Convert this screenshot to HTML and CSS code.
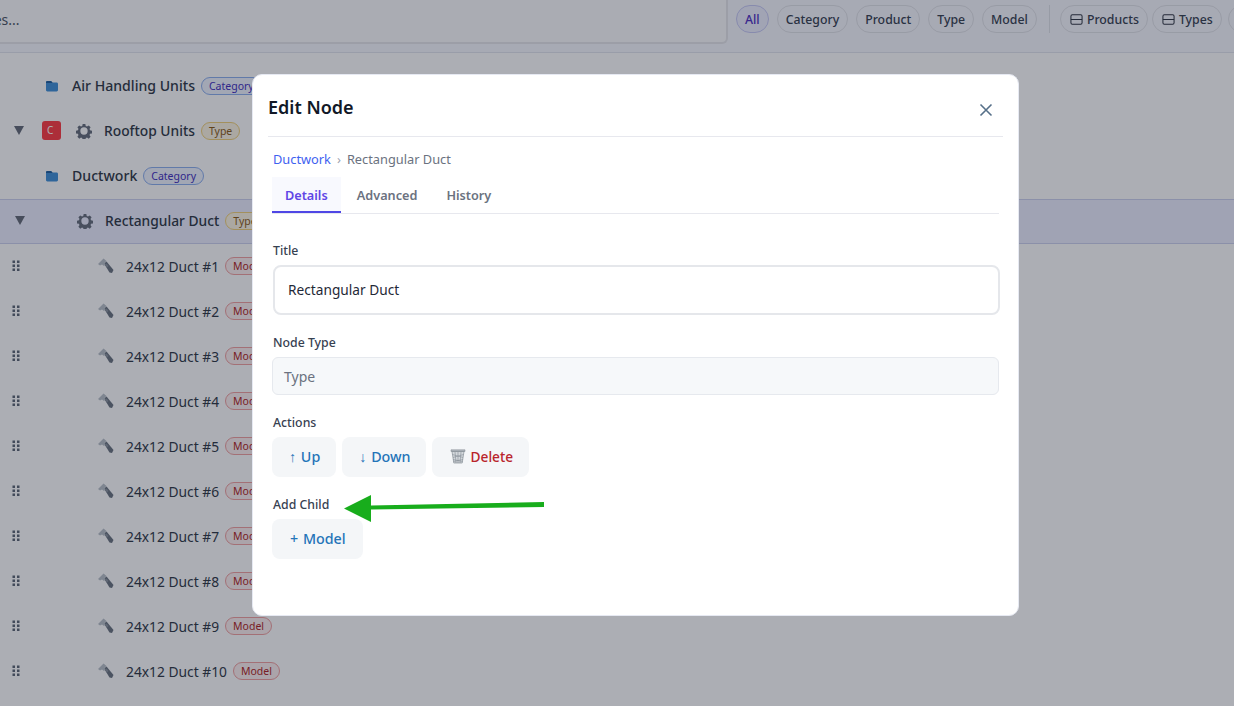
FILE: index.html
```html
<!DOCTYPE html>
<html lang="en">
<head>
    <meta charset="UTF-8">
    <meta name="viewport" content="width=device-width, initial-scale=1.0">
    <title>Edit Node</title>
    <link rel="stylesheet" href="styles.css">
</head>
<body>

<svg class="sprites" width="0" height="0">
    <symbol id="i-folder" viewBox="0 0 14 14">
        <path fill="#3f8fd8" d="M1 3.4C1 2.6 1.6 2 2.4 2h3.1c.5 0 .8.2 1.1.6l.7.9h4.3c.8 0 1.4.6 1.4 1.4v6.2c0 .8-.6 1.4-1.4 1.4H2.400C1.600 12.500 1 11.900 1 11.100z"/>
        <path fill="#1f5f9e" d="M1 3.400C1 2.600 1.600 2 2.400 2h3.100c.5 0 .8.2 1.100.6l1.100 1.500H1z"/>
    </symbol>
    <symbol id="i-gear" viewBox="0 0 24 24">
        <path fill="#666d7c" fill-rule="evenodd" d="M10 1.500h4l.6 3c.7.2 1.300.5 1.900.9l2.600-1.700 2.800 2.800-1.700 2.600c.4.6.7 1.200.9 1.900l3 .6v4l-3 .6c-.2.7-.5 1.300-.9 1.900l1.700 2.600-2.800 2.800-2.600-1.700c-.6.4-1.200.7-1.900.9l-.6 3h-4l-.6-3c-.7-.2-1.300-.5-1.900-.9l-2.600 1.700-2.800-2.800 1.700-2.600c-.4-.6-.7-1.200-.9-1.900l-3-.6v-4l3-.6c.2-.7.5-1.300.9-1.900L2.100 6.500l2.800-2.800 2.600 1.700c.6-.4 1.200-.7 1.900-.9zM12 6.500a5.500 5.500 0 1 0 0 11 5.500 5.500 0 0 0 0-11z"/>
    </symbol>
    <symbol id="i-wrench" viewBox="0 0 16 16">
        <path fill="#6b7480" d="M6 5.500 8.500 3.500l7 8.500-1.500 3-2.500-.5z"/>
        <path fill="#b9c0c8" d="M0 6 5.500 0.500 8.500 3 6.500 5 7.500 6.500 6 8 4 6.500 2 7.500z"/>
        <path fill="#8a939e" d="M7 7 8.500 5.500 10.500 8 9 9.500z"/>
    </symbol>
    <symbol id="i-grip" viewBox="0 0 8 12">
        <g fill="#5d6675">
            <rect x="0.500" y="0.500" width="2.500" height="2.500"/><rect x="5" y="0.500" width="2.500" height="2.500"/>
            <rect x="0.500" y="4.500" width="2.500" height="2.500"/><rect x="5" y="4.500" width="2.500" height="2.500"/>
            <rect x="0.500" y="8.500" width="2.500" height="2.500"/><rect x="5" y="8.500" width="2.500" height="2.500"/>
        </g>
    </symbol>
    <symbol id="i-collapse" viewBox="0 0 14 14">
        <rect x="1" y="2" width="12" height="10" rx="1.500" fill="none" stroke="#2f3542" stroke-width="1.100"/>
        <path d="M1 7h12" stroke="#2f3542" stroke-width="1.100"/>
    </symbol>
</svg>

<!-- page behind the dialog -->
<div class="toolbar">
    <div class="search">Search nodes...</div>
    <div class="chips">
        <span class="chip chip-on">All</span>
        <span class="chip">Category</span>
        <span class="chip">Product</span>
        <span class="chip">Type</span>
        <span class="chip">Model</span>
        <span class="chip-sep"></span>
        <span class="chip chip-tool"><svg class="chip-icon"><use href="#i-collapse"/></svg>Products</span>
        <span class="chip chip-tool"><svg class="chip-icon"><use href="#i-collapse"/></svg>Types</span>
        <span class="chip chip-tool chip-cut"><svg class="chip-icon"><use href="#i-collapse"/></svg></span>
    </div>
</div>

<div class="tree">
    <div class="row row-category">
        <svg class="icon-folder"><use href="#i-folder"/></svg>
        <span class="name">Air Handling Units</span>
        <span class="badge badge-category">Category</span>
    </div>
    <div class="row row-type">
        <span class="caret"></span>
        <span class="letter">C</span>
        <svg class="icon-gear"><use href="#i-gear"/></svg>
        <span class="name">Rooftop Units</span>
        <span class="badge badge-type">Type</span>
    </div>
    <div class="row row-category">
        <svg class="icon-folder"><use href="#i-folder"/></svg>
        <span class="name">Ductwork</span>
        <span class="badge badge-category">Category</span>
    </div>
    <div class="row row-selected">
        <span class="caret"></span>
        <svg class="icon-gear"><use href="#i-gear"/></svg>
        <span class="name">Rectangular Duct</span>
        <span class="badge badge-type">Type</span>
    </div>
    <div class="row row-model">
        <svg class="grip"><use href="#i-grip"/></svg>
        <svg class="icon-wrench"><use href="#i-wrench"/></svg>
        <span class="name">24x12 Duct #1</span>
        <span class="badge badge-model">Model</span>
    </div>
    <div class="row row-model">
        <svg class="grip"><use href="#i-grip"/></svg>
        <svg class="icon-wrench"><use href="#i-wrench"/></svg>
        <span class="name">24x12 Duct #2</span>
        <span class="badge badge-model">Model</span>
    </div>
    <div class="row row-model">
        <svg class="grip"><use href="#i-grip"/></svg>
        <svg class="icon-wrench"><use href="#i-wrench"/></svg>
        <span class="name">24x12 Duct #3</span>
        <span class="badge badge-model">Model</span>
    </div>
    <div class="row row-model">
        <svg class="grip"><use href="#i-grip"/></svg>
        <svg class="icon-wrench"><use href="#i-wrench"/></svg>
        <span class="name">24x12 Duct #4</span>
        <span class="badge badge-model">Model</span>
    </div>
    <div class="row row-model">
        <svg class="grip"><use href="#i-grip"/></svg>
        <svg class="icon-wrench"><use href="#i-wrench"/></svg>
        <span class="name">24x12 Duct #5</span>
        <span class="badge badge-model">Model</span>
    </div>
    <div class="row row-model">
        <svg class="grip"><use href="#i-grip"/></svg>
        <svg class="icon-wrench"><use href="#i-wrench"/></svg>
        <span class="name">24x12 Duct #6</span>
        <span class="badge badge-model">Model</span>
    </div>
    <div class="row row-model">
        <svg class="grip"><use href="#i-grip"/></svg>
        <svg class="icon-wrench"><use href="#i-wrench"/></svg>
        <span class="name">24x12 Duct #7</span>
        <span class="badge badge-model">Model</span>
    </div>
    <div class="row row-model">
        <svg class="grip"><use href="#i-grip"/></svg>
        <svg class="icon-wrench"><use href="#i-wrench"/></svg>
        <span class="name">24x12 Duct #8</span>
        <span class="badge badge-model">Model</span>
    </div>
    <div class="row row-model">
        <svg class="grip"><use href="#i-grip"/></svg>
        <svg class="icon-wrench"><use href="#i-wrench"/></svg>
        <span class="name">24x12 Duct #9</span>
        <span class="badge badge-model">Model</span>
    </div>
    <div class="row row-model">
        <svg class="grip"><use href="#i-grip"/></svg>
        <svg class="icon-wrench"><use href="#i-wrench"/></svg>
        <span class="name">24x12 Duct #10</span>
        <span class="badge badge-model">Model</span>
    </div>
</div>

<!-- dialog -->
<div class="backdrop"></div>
<div class="modal">
    <div class="modal-head">
        <h2>Edit Node</h2>
        <svg class="close" viewBox="0 0 14 14"><path d="M1.500 1.500l11 11M12.500 1.500l-11 11"/></svg>
    </div>
    <div class="modal-body">
        <div class="crumbs"><a href="#">Ductwork</a><span class="crumb-sep">›</span><span>Rectangular Duct</span></div>
        <div class="tabs">
            <span class="tab tab-on">Details</span>
            <span class="tab">Advanced</span>
            <span class="tab">History</span>
        </div>

        <label class="field-label label-title">Title</label>
        <div class="input-title">Rectangular Duct</div>

        <label class="field-label label-next">Node Type</label>
        <div class="input-type">Type</div>

        <label class="field-label label-next">Actions</label>
        <div class="actions">
            <button type="button" class="btn btn-up">↑ Up</button>
            <button type="button" class="btn btn-down">↓ Down</button>
            <button type="button" class="btn btn-delete">
                <svg class="trash" viewBox="0 0 16 16">
                    <path fill="#d3d8dc" stroke="#868f97" stroke-width="0.700" d="M2 3.500h12l-1.800 11.500H3.800z"/>
                    <path fill="none" stroke="#868f97" stroke-width="0.600" d="M5 4l1 11M8 4v11M11 4l-1 11M2.500 6.500l10.500 3M13.500 6.500 3 9.500M3 11.500l9.500 2M13 11.500l-9.500 2"/>
                    <path fill="#aeb5bc" stroke="#79828a" stroke-width="0.500" d="M1 1.800h14v1.700H1z"/>
                </svg>Delete
            </button>
        </div>

        <label class="field-label label-next">Add Child</label>
        <button type="button" class="btn btn-model">+ Model</button>
    </div>
</div>

<!-- annotation arrow drawn over the screenshot -->
<svg class="arrow" viewBox="0 0 204 32" width="204" height="32">
    <path fill="#18ad1c" d="M4 16.500 31 3v10.500l173-3.500v5L31 17.500V30z"/>
</svg>

</body>
</html>
```

FILE: styles.css
```css
/* page */
html, body {
    height: 100%;
}

body {
    margin: 0;
    height: 706px;
    overflow: hidden;
    background-color: #ffffff;
    color: #1f2937;
    font-family: "Noto Sans", "Liberation Sans", sans-serif;
}

.sprites {
    display: block;
    height: 0;
}

/* top filter bar */
.toolbar {
    display: flex;
    align-items: flex-start;
    height: 52px;
    background-color: #f8f9ff;
    border-bottom: 1px solid #e2e5ee;
}

.search {
    flex: none;
    box-sizing: border-box;
    width: 828px;
    height: 44px;
    margin-left: -100px;
    padding: 10px 0 0 18px;
    background-color: #fcfcfd;
    border: 2px solid #e6e7eb;
    border-top: 0;
    border-radius: 0 0 6px 0;
    color: #4b5563;
    font-size: 14px;
    line-height: 20px;
}

.chips {
    display: flex;
    flex: none;
    align-items: center;
    gap: 8px;
    height: 28px;
    margin-top: 5px;
    margin-left: 8px;
}

.chip {
    display: flex;
    align-items: center;
    height: 28px;
    box-sizing: border-box;
    padding: 0 8px;
    border: 1px solid #e1e3e9;
    border-radius: 14px;
    color: #374151;
    font-size: 12.300px;
    font-weight: 500;
    white-space: nowrap;
}

.chip-on {
    border-color: #c7c9f5;
    background-color: #eef0ff;
    color: #4f2fc4;
}

.chip-sep {
    width: 1px;
    height: 28px;
    margin: 0 2px 0 4px;
    background-color: #dfe2e9;
}

.chip-tool {
    margin-right: -4px;
    padding-left: 9px;
}

.chip-cut {
    width: 40px;
    margin-left: 2px;
}

.chip-icon {
    width: 13px;
    height: 13px;
    margin-right: 4px;
}

/* tree */
.tree {
    padding-top: 11px;
}

.row {
    display: flex;
    align-items: center;
    box-sizing: border-box;
    height: 45px;
    padding-bottom: 2px;
    font-size: 13.800px;
    font-weight: 500;
    white-space: nowrap;
}

.row-category {
    padding-left: 45px;
    font-size: 14.100px;
}

.row-type {
    padding-left: 14px;
}

.row-selected {
    padding-left: 15px;
    background-color: #edefff;
    border-top: 1px solid #cdd2ee;
    border-bottom: 1px solid #cdd2ee;
}

.row-model {
    padding-left: 12px;
    padding-bottom: 1px;
    font-weight: 400;
}

.caret {
    flex: none;
    width: 0;
    height: 0;
    border-left: 5px solid transparent;
    border-right: 5px solid transparent;
    border-top: 9px solid #646b78;
}

.letter {
    flex: none;
    width: 19px;
    height: 19px;
    margin-left: 18px;
    border-radius: 3px;
    background-color: #ff3b42;
    color: #fff;
    font-size: 10px;
    font-weight: 400;
    line-height: 19px;
    text-indent: 5px;
}

.icon-folder {
    flex: none;
    width: 14px;
    height: 14px;
    margin-right: 13px;
}

.icon-gear {
    flex: none;
    width: 16px;
    height: 16px;
    margin-right: 12px;
}

.row-type .icon-gear {
    margin-left: 15px;
}

.row-selected .icon-gear {
    margin-left: 52px;
}

.grip {
    flex: none;
    width: 8px;
    height: 12px;
}

.icon-wrench {
    flex: none;
    width: 16px;
    height: 16px;
    margin-left: 78px;
    margin-right: 12px;
}

.name {
    flex: none;
    color: #2f3846;
}

.badge {
    flex: none;
    box-sizing: border-box;
    height: 18px;
    margin-left: 6px;
    padding: 0 7px;
    border: 1px solid;
    border-radius: 9px;
    font-size: 10.500px;
    font-weight: 400;
    line-height: 16px;
}

.badge-category {
    background-color: #f0f4ff;
    border-color: #8db0ef;
    color: #3f2fc0;
}

.badge-type {
    background-color: #fdf6e3;
    border-color: #f2d27a;
    color: #8a5a16;
}

.badge-model {
    background-color: #fdf0f0;
    border-color: #f2a0a0;
    color: #b01f24;
}

/* dialog */
.backdrop {
    position: fixed;
    inset: 0;
    background-color: rgba(17, 24, 39, 0.35);
}

.modal {
    position: fixed;
    top: 74px;
    left: 252px;
    box-sizing: border-box;
    width: 767px;
    height: 542px;
    padding: 0 16px;
    background-color: #fff;
    border: 1px solid #e6e9f2;
    border-radius: 10px;
}

.modal-head {
    display: flex;
    align-items: center;
    justify-content: space-between;
    box-sizing: border-box;
    height: 62px;
    margin: 0 -1px;
    padding-right: 10px;
    border-bottom: 1px solid #e7e8ee;
}

.modal-head h2 {
    margin: 3px 0 0;
    color: #111827;
    font-size: 18px;
    font-weight: 600;
}

.close {
    width: 14px;
    height: 14px;
    margin-top: 8px;
}

.close path {
    fill: none;
    stroke: #567089;
    stroke-width: 1.600;
}

.modal-body {
    padding: 13px 3px 0 3px;
}

.crumbs {
    display: flex;
    height: 18px;
    padding-left: 1px;
    color: #6b7280;
    font-size: 12.800px;
    line-height: 18px;
}

.crumbs a {
    color: #3f62f0;
    text-decoration: none;
}

.crumb-sep {
    margin: 0 6px;
    color: #9ca3af;
}

.tabs {
    display: flex;
    height: 37px;
    box-sizing: border-box;
    margin-top: 9px;
    border-bottom: 1px solid #e7e8ee;
}

.tab {
    box-sizing: border-box;
    height: 36px;
    padding: 0 13px;
    margin-right: 3px;
    color: #6b7280;
    font-size: 12.700px;
    font-weight: 600;
    line-height: 36px;
}

.tab-on {
    background-color: #f8f9fe;
    border-bottom: 2px solid #4f46e5;
    color: #6046e6;
}

.field-label {
    display: block;
    padding-left: 1px;
    color: #374151;
    font-size: 12.300px;
    font-weight: 500;
    line-height: 18px;
}

.label-title {
    margin-top: 28px;
}

.label-next {
    margin-top: 19px;
}

.input-title {
    box-sizing: border-box;
    height: 50px;
    margin: 5px -1px 0 1px;
    padding-left: 13px;
    border: 2px solid #e5e7eb;
    border-radius: 8px;
    color: #1f2937;
    font-size: 13.700px;
    line-height: 46px;
}

.input-type {
    box-sizing: border-box;
    height: 38px;
    margin-top: 5px;
    padding-left: 11px;
    background-color: #f6f8fa;
    border: 1px solid #e6e9ee;
    border-radius: 6px;
    color: #6b7280;
    font-size: 14px;
    line-height: 37px;
}

.actions {
    display: flex;
    gap: 6px;
    margin-top: 5px;
}

.btn {
    display: flex;
    align-items: center;
    height: 40px;
    padding: 0 16px 2px 17px;
    background-color: #f4f6f8;
    border: none;
    border-radius: 8px;
    color: #2474b8;
    font-family: inherit;
    font-size: 14.300px;
    font-weight: 500;
    word-spacing: 1px;
}

.btn-down {
    padding-right: 15px;
}

.btn-delete {
    padding-left: 18px;
    color: #b9242c;
    font-size: 13.700px;
}

.btn-model {
    margin-top: 5px;
    padding: 0 17px 2px 18px;
}

.trash {
    width: 16px;
    height: 16px;
    margin-right: 5px;
}

/* green arrow */
.arrow {
    position: fixed;
    top: 492px;
    left: 340px;
}
```
